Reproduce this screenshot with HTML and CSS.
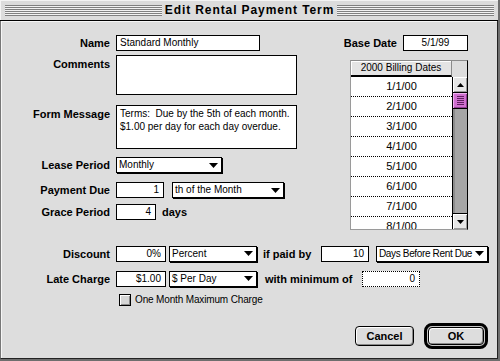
FILE: index.html
```html
<!DOCTYPE html>
<html>
<head>
<meta charset="utf-8">
<link rel="stylesheet" href="styles.css">
</head>
<body>
<div class="window">
  <div class="titlebar">
    <span class="stripes"></span>
    <span class="title">Edit Rental Payment Term</span>
    <span class="stripes"></span>
  </div>
  <div class="body">
    <div class="top">
      <div class="left">
        <div class="row r-name">
          <span class="lbl">Name</span>
          <div class="field w-name">Standard Monthly</div>
        </div>
        <div class="row r-comments">
          <span class="lbl">Comments</span>
          <div class="field area a-comments"></div>
        </div>
        <div class="row r-form">
          <span class="lbl">Form Message</span>
          <div class="field area a-form">Terms:&nbsp; Due by the 5th of each month.<br>$1.00 per day for each day overdue.</div>
        </div>
        <div class="row r-lease">
          <span class="lbl">Lease Period</span>
          <div class="popup w-lease"><span>Monthly</span><svg class="arrow" width="9" height="5" viewBox="0 0 9 5"><polygon points="0,0 9,0 4.5,5" fill="#000"/></svg></div>
        </div>
        <div class="row r-due">
          <span class="lbl">Payment Due</span>
          <div class="field num w-due">1</div>
          <div class="popup w-month"><span>th of the Month</span><svg class="arrow" width="9" height="5" viewBox="0 0 9 5"><polygon points="0,0 9,0 4.5,5" fill="#000"/></svg></div>
        </div>
        <div class="row r-grace">
          <span class="lbl">Grace Period</span>
          <div class="field num w-grace">4</div>
          <span class="blbl days">days</span>
        </div>
      </div>
      <div class="right">
        <div class="row base">
          <span class="blbl base-lbl">Base Date</span>
          <div class="field center w-base">5/1/99</div>
        </div>
        <div class="list">
          <div class="list-head">
            <div class="lh-title">2000 Billing Dates</div>
            <div class="lh-corner"></div>
          </div>
          <div class="list-main">
            <div class="rows">
              <div class="item">1/1/00</div>
              <div class="item">2/1/00</div>
              <div class="item">3/1/00</div>
              <div class="item">4/1/00</div>
              <div class="item">5/1/00</div>
              <div class="item">6/1/00</div>
              <div class="item">7/1/00</div>
              <div class="item">8/1/00</div>
            </div>
            <div class="scroll">
              <div class="sbtn up"><svg width="7" height="4" viewBox="0 0 7 4"><polygon points="0,4 7,4 3.5,0" fill="#000"/></svg></div>
              <div class="thumb"><span class="grip"></span></div>
              <div class="track"></div>
              <div class="sbtn down"><svg width="7" height="4" viewBox="0 0 7 4"><polygon points="0,0 7,0 3.5,4" fill="#000"/></svg></div>
            </div>
          </div>
        </div>
      </div>
    </div>

    <div class="bottom">
      <div class="brow r-disc">
        <span class="lbl">Discount</span>
        <div class="field num w-amt">0%</div>
        <div class="popup w-kind"><span>Percent</span><svg class="arrow" width="9" height="5" viewBox="0 0 9 5"><polygon points="0,0 9,0 4.5,5" fill="#000"/></svg></div>
        <span class="blbl paid">if paid by</span>
        <div class="field num w-paid">10</div>
        <div class="popup w-before"><span class="tight">Days Before Rent Due</span><svg class="arrow" width="9" height="5" viewBox="0 0 9 5"><polygon points="0,0 9,0 4.5,5" fill="#000"/></svg></div>
      </div>
      <div class="brow r-late">
        <span class="lbl">Late Charge</span>
        <div class="field num w-amt">$1.00</div>
        <div class="popup w-kind"><span>$ Per Day</span><svg class="arrow" width="9" height="5" viewBox="0 0 9 5"><polygon points="0,0 9,0 4.5,5" fill="#000"/></svg></div>
        <span class="blbl minof">with minimum of</span>
        <div class="field num dotted w-min">0</div>
      </div>
      <div class="crow">
        <span class="check"></span>
        <span class="clbl">One Month Maximum Charge</span>
      </div>
      <div class="buttons">
        <div class="btn cancel">Cancel</div>
        <div class="ring"><div class="btn ok">OK</div></div>
      </div>
    </div>
  </div>
</div>
</body>
</html>
```

FILE: styles.css
```css
* { box-sizing: border-box; margin: 0; padding: 0; }

body {
  margin: 0;
  background: #fff;
  font-family: "Liberation Sans", Arial, sans-serif;
  font-size: 10px;
  color: #000;
}

.window {
  width: 500px;
  height: 361px;
  display: flex;
  flex-direction: column;
  background: #dddddd;
  border-right: 2px solid #6e6e6e;
  border-bottom: 2px solid #6e6e6e;
}

.titlebar {
  height: 21px;
  flex: none;
  display: flex;
  align-items: center;
  padding: 0 4px 0 5px;
  background: #dcdcdc;
  border-bottom: 1px solid #000;
  box-shadow: inset 1px 1px 0 #f4f4f4;
}

.stripes {
  flex: 1;
  height: 11px;
  background: repeating-linear-gradient(to bottom, #808080 0 1px, #f2f2f2 1px 2px);
}

.title {
  font-family: "Liberation Sans", Arial, sans-serif;
  font-weight: bold;
  font-size: 12px;
  letter-spacing: 0.9px;
  padding: 0 3px;
  line-height: 14px;
}

.body {
  flex: 1;
  display: flex;
  flex-direction: column;
  border-left: 1px solid #777;
  border-right: 1px solid #222;
  border-bottom: 1px solid #222;
  box-shadow: inset 1px 1px 0 #f6f6f6;
}

.top {
  display: flex;
  margin-top: 14px;
}

.left {
  width: 339px;
  display: flex;
  flex-direction: column;
}

.row {
  display: flex;
  align-items: flex-start;
}

.lbl {
  width: 115px;
  flex: none;
  padding-right: 6px;
  text-align: right;
  font-weight: bold;
  font-size: 11px;
  line-height: 16px;
}

.blbl {
  font-weight: bold;
  font-size: 11px;
  line-height: 16px;
}

.field {
  height: 16px;
  border: 1px solid #000;
  background: #fff;
  padding: 0 3px;
  line-height: 14px;
  white-space: nowrap;
}

.field.num { text-align: right; padding-right: 4px; }
.field.center { text-align: center; }
.field.dotted { border: 1px dotted #000; }

.area {
  white-space: normal;
  line-height: 13px;
  padding: 1px 3px;
}

.w-name { width: 144px; }
.a-comments { width: 181px; height: 40px; }
.a-form { width: 181px; height: 44px; }
.w-due { width: 48px; }
.w-grace { width: 40px; }
.w-base { width: 65px; }

.r-comments { margin-top: 4px; }
.r-form { margin-top: 10px; }
.r-form .lbl, .r-comments .lbl { padding-top: 1px; }
.r-lease { margin-top: 8px; }
.r-due { margin-top: 9px; }
.r-grace { margin-top: 6px; }

.days { margin-left: 6px; }

.popup {
  height: 16px;
  border: 1px solid #000;
  box-shadow: 1px 1px 0 #000;
  background: #fff;
  display: flex;
  align-items: center;
  justify-content: space-between;
  padding: 0 3px 0 2px;
  line-height: 14px;
  white-space: nowrap;
}

.popup .arrow { flex: none; }
.popup .tight { letter-spacing: -0.35px; }

.w-lease { width: 106px; }
.w-month { width: 112px; margin-left: 8px; }

.right {
  width: 128px;
  display: flex;
  flex-direction: column;
}

.base { justify-content: flex-end; }
.base-lbl { margin-right: 6px; }

.list {
  margin: 9px 0 0 10px;
  width: 118px;
  height: 170px;
  display: flex;
  flex-direction: column;
  border-top: 1px solid #8a8a8a;
  border-left: 1px solid #9a9a9a;
  border-right: 1px solid #000;
  border-bottom: 1px solid #9a9a9a;
}

.list-head {
  display: flex;
  height: 16px;
  flex: none;
}

.lh-title {
  width: 101px;
  text-align: center;
  background: #e4e4e4;
  border-bottom: 2px solid #000;
  border-right: 1px solid #8a8a8a;
  box-shadow: inset 1px 1px 0 #fff;
  line-height: 14px;
}

.lh-corner {
  flex: 1;
  background: #dddddd;
}

.list-main {
  flex: 1;
  display: flex;
  overflow: hidden;
}

.rows {
  width: 101px;
  background: #fff;
  overflow: hidden;
}

.item {
  height: 20px;
  border-bottom: 1px dotted #000;
  text-align: center;
  line-height: 19px;
  font-size: 11px;
}

.scroll {
  flex: 1;
  display: flex;
  flex-direction: column;
  border-left: 1px solid #000;
  background: #a6a6a6;
}

.sbtn {
  height: 16px;
  flex: none;
  display: flex;
  align-items: center;
  justify-content: center;
  background: #e6e6e6;
  box-shadow: inset 1px 1px 0 #fff, inset -1px -1px 0 #999;
}

.sbtn.up { border-bottom: 1px solid #000; }
.sbtn.down { border-top: 1px solid #000; }

.thumb {
  height: 16px;
  flex: none;
  background: #d070d0;
  border-bottom: 1px solid #000;
  box-shadow: inset 1px 1px 0 #f0b0f0, inset -1px -1px 0 #904090;
  display: flex;
  align-items: center;
  justify-content: center;
}

.grip {
  width: 7px;
  height: 9px;
  background: repeating-linear-gradient(to bottom, #602060 0 1px, transparent 1px 2px);
}

.track {
  flex: 1;
  box-shadow: inset 2px 0 0 #8c8c8c;
}

.bottom {
  display: flex;
  flex-direction: column;
  margin-top: 15px;
}

.brow {
  display: flex;
  align-items: center;
  height: 17px;
}

.r-late { margin-top: 8px; }

.w-amt { width: 50px; }
.w-kind { width: 88px; margin-left: 3px; }
.paid { width: 58px; margin-left: 6px; }
.w-paid { width: 48px; }
.w-before { width: 112px; margin-left: 7px; }
.minof { width: 97px; margin-left: 8px; }
.w-min { width: 58px; }

.crow {
  display: flex;
  align-items: center;
  margin-top: 7px;
  height: 12px;
}

.check {
  width: 12px;
  height: 12px;
  margin-left: 118px;
  border: 1px solid #000;
  background: #d6d6d6;
  box-shadow: inset 1px 1px 0 #fff, inset -1px -1px 0 #8a8a8a;
}

.clbl {
  margin-left: 4px;
  line-height: 12px;
  letter-spacing: -0.15px;
}

.buttons {
  display: flex;
  justify-content: flex-end;
  align-items: center;
  margin-top: 17px;
  padding-right: 9px;
}

.btn {
  border: 1px solid #000;
  border-radius: 4px;
  background: #dddddd;
  box-shadow: inset 1px 1px 0 #fff, inset -1px -1px 0 #8a8a8a;
  font-weight: bold;
  font-size: 11px;
  text-align: center;
  display: flex;
  align-items: center;
  justify-content: center;
}

.cancel {
  width: 59px;
  height: 20px;
}

.ring {
  width: 64px;
  height: 26px;
  margin-left: 10px;
  border: 3px solid #000;
  border-radius: 8px;
  padding: 1px;
  background: #c8c8c8;
}

.ok {
  width: 100%;
  height: 100%;
}
```
